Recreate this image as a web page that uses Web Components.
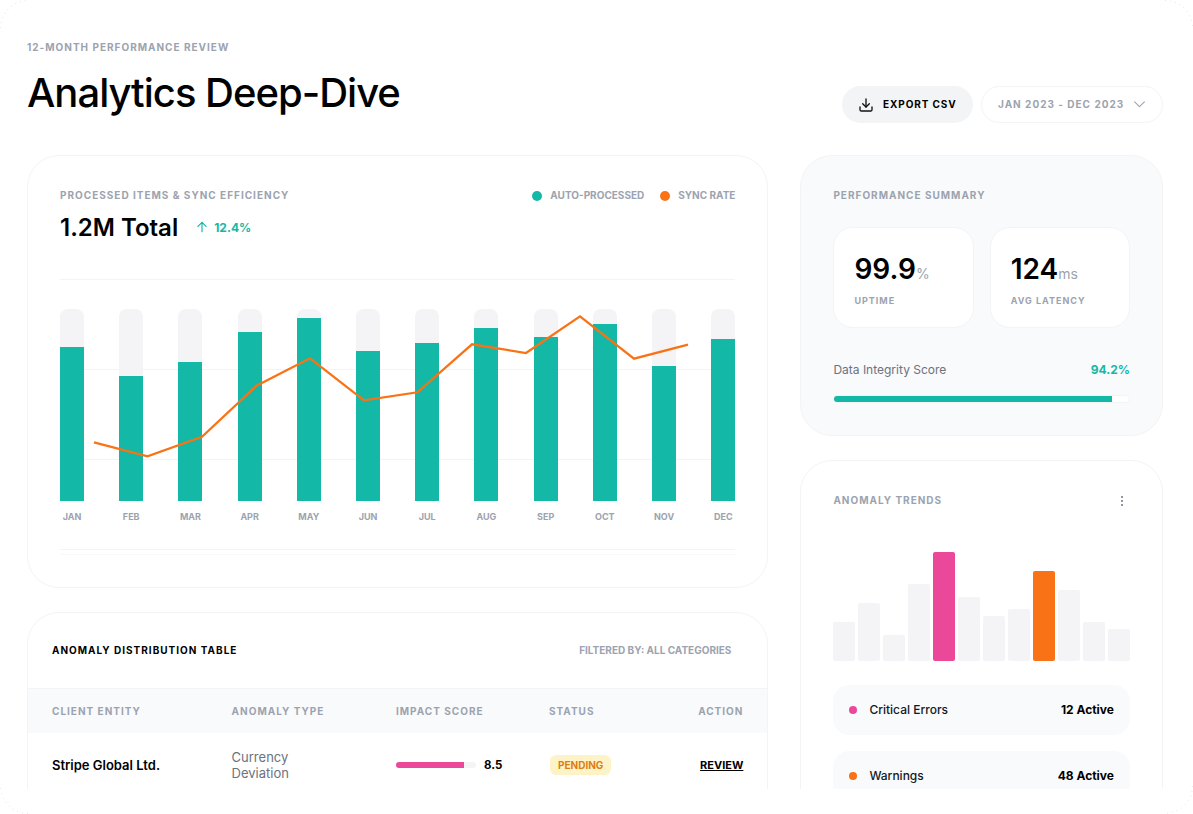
<!DOCTYPE html>
<html lang="en">
<head>
<meta charset="utf-8">
<title>Analytics Deep-Dive</title>
<style>
  html, body { margin: 0; padding: 0; background: #fff; }
  body { font-family: Inter, "Liberation Sans", sans-serif; color: #000; }
</style>
</head>
<body>
<app-frame>
  <page-header></page-header>
  <div slot="left">
    <sync-chart></sync-chart>
    <anomaly-table>
      <anomaly-row client="Stripe Global Ltd." type="Currency Deviation" score="8.5" status="Pending" action="Review"></anomaly-row>
    </anomaly-table>
  </div>
  <div slot="right">
    <summary-card>
      <stat-tile value="99.9" unit="%" label="Uptime"></stat-tile>
      <stat-tile value="124" unit="ms" label="Avg Latency"></stat-tile>
    </summary-card>
    <trends-card>
      <legend-row name="Critical Errors" count="12 Active" color="#ec4899"></legend-row>
      <legend-row name="Warnings" count="48 Active" color="#f97316"></legend-row>
    </trends-card>
  </div>
</app-frame>

<script>
const reset = `*{margin:0;padding:0;box-sizing:border-box;} :host{box-sizing:border-box;}`;

function define(name, html) {
  customElements.define(name, class extends HTMLElement {
    constructor() {
      super();
      const root = this.attachShadow({ mode: 'open' });
      root.innerHTML = typeof html === 'function' ? html(this) : html;
    }
  });
}

define('app-frame', `
<style>
  ${reset}
  :host{display:block;position:relative;width:1193px;height:814px;overflow:hidden;background:#fff;}
  .clip{height:789px;overflow:hidden;padding:40px 30px 0 27px;}
  .cols{display:grid;grid-template-columns:741.4px 1fr;gap:32px;margin-top:32px;}
  ::slotted([slot]){display:flex;flex-direction:column;gap:24px;}
  svg{position:absolute;inset:0;pointer-events:none;}
</style>
<div class="clip">
  <slot></slot>
  <div class="cols">
    <slot name="left"></slot>
    <slot name="right"></slot>
  </div>
</div>
<svg width="1193" height="814" fill="none" stroke="#e0e2e6" stroke-width="1" stroke-dasharray="1 4">
  <path d="M.5 28A27.5 27.5 0 0 1 28 .5"/>
  <path d="M1165 .5A27.5 27.5 0 0 1 1192.5 28"/>
  <path d="M1192.5 786A27.5 27.5 0 0 1 1165 813.5"/>
  <path d="M28 813.5A27.5 27.5 0 0 1 .5 786"/>
</svg>
`);

define('page-header', `
<style>
  ${reset}
  :host{display:flex;justify-content:space-between;align-items:flex-end;}
  .eyebrow{font-size:10px;line-height:15px;font-weight:700;letter-spacing:1px;color:#9ca3af;text-transform:uppercase;margin-bottom:8px;}
  h1{font-size:40px;line-height:60px;font-weight:500;letter-spacing:-1px;color:#000;}
  .actions{display:flex;gap:8px;}
  .btn{display:flex;align-items:center;height:37px;border-radius:19px;font-size:10px;font-weight:700;letter-spacing:1px;text-transform:uppercase;white-space:nowrap;}
  .btn span{margin-bottom:2px;}
  .btn svg{flex-shrink:0;}
  .export{background:#f3f4f6;color:#000;padding:0 16px;gap:9px;width:131px;}
  .export span{letter-spacing:.9px;}
  .range{background:#fff;border:1px solid #f3f4f6;color:#9ca3af;padding:0 16px;gap:9px;width:182px;}
</style>
<div>
  <div class="eyebrow">12-Month Performance Review</div>
  <h1>Analytics Deep-Dive</h1>
</div>
<div class="actions">
  <div class="btn export">
    <svg width="16" height="16" viewBox="0 0 24 24" fill="none" stroke="#111" stroke-width="2" stroke-linecap="round" stroke-linejoin="round"><path d="M21 15v4a2 2 0 0 1-2 2H5a2 2 0 0 1-2-2v-4"/><path d="M7 10l5 5 5-5"/><path d="M12 15V3"/></svg>
    <span>Export CSV</span>
  </div>
  <div class="btn range">
    <span>Jan 2023 - Dec 2023</span>
    <svg width="13" height="13" viewBox="0 0 24 24" fill="none" stroke="#9ca3af" stroke-width="2" stroke-linecap="round" stroke-linejoin="round"><path d="M3 7l9 9 9-9"/></svg>
  </div>
</div>
`);

const months = [
  ['Jan', 154], ['Feb', 125], ['Mar', 139], ['Apr', 169], ['May', 183], ['Jun', 150],
  ['Jul', 158], ['Aug', 173], ['Sep', 164], ['Oct', 177], ['Nov', 135], ['Dec', 162],
];

define('sync-chart', `
<style>
  ${reset}
  :host{display:block;background:#fff;border:1px solid #f3f4f6;border-radius:32px;padding:32px;height:433px;}
  .head{display:flex;justify-content:space-between;align-items:flex-start;}
  .title{font-size:10px;line-height:15px;font-weight:700;letter-spacing:1px;color:#9ca3af;text-transform:uppercase;}
  .total{display:flex;align-items:center;margin-top:8px;height:32px;}
  .total b{font-size:24px;font-weight:600;color:#000;}
  .delta{display:flex;align-items:center;gap:5px;margin-left:17px;font-size:12px;font-weight:700;color:#14b8a6;}
  .legend{display:flex;gap:16px;font-size:10px;line-height:15px;font-weight:700;color:#9ca3af;text-transform:uppercase;}
  .legend span{display:flex;align-items:center;gap:8px;}
  .legend i{width:10px;height:10px;border-radius:50%;}
  .chart{position:relative;height:271px;margin-top:36px;}
  .lines{position:absolute;inset:0;display:flex;flex-direction:column;justify-content:space-between;}
  .lines div{height:1px;background:#f3f4f6;}
  .bars{position:relative;display:flex;justify-content:space-between;padding-top:30px;}
  .col{width:24px;}
  .track{position:relative;height:192px;background:#f4f4f6;border-radius:8px 8px 0 0;overflow:hidden;}
  .fill{position:absolute;left:0;right:0;bottom:0;background:#14b8a6;}
  .month{margin-top:9px;font-size:9px;line-height:13px;font-weight:700;color:#9ca3af;text-align:center;text-transform:uppercase;white-space:nowrap;}
  .line{position:absolute;left:0;top:0;}
  .foot{height:1px;background:#f7f8f9;margin-top:4px;}
</style>
<div class="head">
  <div>
    <div class="title">Processed Items &amp; Sync Efficiency</div>
    <div class="total">
      <b>1.2M Total</b>
      <span class="delta">
        <svg width="14" height="14" viewBox="0 0 24 24" fill="none" stroke="#14b8a6" stroke-width="2" stroke-linecap="round" stroke-linejoin="round"><path d="M12 20V4"/><path d="M5 11l7-7 7 7"/></svg>
        12.4%
      </span>
    </div>
  </div>
  <div class="legend">
    <span><i style="background:#14b8a6"></i>Auto-Processed</span>
    <span><i style="background:#f97316"></i>Sync Rate</span>
  </div>
</div>
<div class="chart">
  <div class="lines"><div></div><div></div><div></div><div></div></div>
  <div class="bars">
    ${months.map(([m, v]) => `<div class="col"><div class="track"><div class="fill" style="height:${v}px"></div></div><div class="month">${m}</div></div>`).join('')}
  </div>
  <svg class="line" width="675" height="271" fill="none" stroke="#f97316" stroke-width="2.25">
    <polyline points="34,163.3 87.5,177.3 142,157.7 196.5,106.7 250,79.3 304,121.3 357.5,113.3 412,65.3 466,74 520,37.3 574,79.7 628,65.7"/>
  </svg>
</div>
<div class="foot"></div>
`);

define('anomaly-table', `
<style>
  ${reset}
  :host{display:block;min-height:260px;background:#fff;border:1px solid #f3f4f6;border-radius:32px;overflow:hidden;}
  .head{display:flex;justify-content:space-between;align-items:center;padding:30px 36px 30px 24px;}
  .head h2{font-size:10px;line-height:15px;font-weight:700;letter-spacing:1px;color:#000;text-transform:uppercase;}
  .head span{font-size:10px;line-height:15px;font-weight:700;color:#9ca3af;text-transform:uppercase;}
  .cols{display:grid;grid-template-columns:179.6px 164.4px 153px 1fr;padding:15px 24px 14px;background:#f9fafb;border-top:1px solid #f3f4f6;font-size:10px;line-height:15px;font-weight:700;letter-spacing:1px;color:#9ca3af;text-transform:uppercase;}
</style>
<div class="head"><h2>Anomaly Distribution Table</h2><span>Filtered by: All Categories</span></div>
<div class="cols"><div>Client Entity</div><div>Anomaly Type</div><div>Impact Score</div><div style="display:flex;justify-content:space-between"><span>Status</span><span>Action</span></div></div>
<slot></slot>
`);

define('anomaly-row', el => `
<style>
  ${reset}
  :host{display:grid;grid-template-columns:179.6px 164.4px 153px 1fr;align-items:center;padding:16px 24px;}
  .client{font-size:13px;font-weight:600;color:#000;}
  .type{font-size:13px;line-height:16px;color:#6b7280;width:80px;}
  .impact{display:flex;align-items:center;gap:8px;font-size:11.5px;font-weight:700;color:#000;}
  .bar{width:80px;height:6px;border-radius:3px;background:#f4f4f6;overflow:hidden;}
  .bar i{display:block;height:100%;background:#ec4899;}
  .last{display:flex;justify-content:space-between;align-items:center;}
  .badge{display:block;height:20px;line-height:20px;padding:0 8px;margin-left:1px;border-radius:6px;background:#fef3c7;color:#dd7d12;font-size:10px;font-weight:700;text-transform:uppercase;}
  a{font-size:11px;font-weight:700;color:#000;text-decoration:underline;text-transform:uppercase;}
</style>
<div class="client">${el.getAttribute('client')}</div>
<div class="type">${el.getAttribute('type')}</div>
<div class="impact"><div class="bar"><i style="width:${parseFloat(el.getAttribute('score')) * 10}%"></i></div>${el.getAttribute('score')}</div>
<div class="last"><span class="badge">${el.getAttribute('status')}</span><a>${el.getAttribute('action')}</a></div>
`);

define('summary-card', `
<style>
  ${reset}
  :host{display:block;background:#f9fafb;border:1px solid #f3f4f6;border-radius:32px;padding:32px;height:281px;}
  .title{font-size:10px;line-height:15px;font-weight:700;letter-spacing:1px;color:#9ca3af;text-transform:uppercase;}
  .tiles{display:grid;grid-template-columns:1fr 1fr;gap:16px;margin-top:24px;}
  .score{display:flex;justify-content:space-between;align-items:center;margin-top:32px;font-size:12px;line-height:20px;color:#6b7280;}
  .score b{font-weight:700;color:#14b8a6;}
  .track{margin-top:15px;height:8px;background:#fff;border:1px solid #f3f4f6;border-radius:4px;overflow:hidden;}
  .track i{display:block;height:100%;width:94.2%;background:#14b8a6;}
</style>
<div class="title">Performance Summary</div>
<div class="tiles"><slot></slot></div>
<div class="score"><span>Data Integrity Score</span><b>94.2%</b></div>
<div class="track"><i></i></div>
`);

define('stat-tile', el => `
<style>
  ${reset}
  :host{display:block;background:#fff;border:1px solid #f3f4f6;border-radius:20px;padding:20px;}
  .value{font-size:28px;line-height:42px;font-weight:600;color:#000;}
  .value span{font-size:14px;line-height:1;font-weight:400;color:#9ca3af;}
  .label{margin-top:4px;font-size:9px;line-height:13px;font-weight:700;letter-spacing:1px;color:#9ca3af;text-transform:uppercase;}
</style>
<div class="value">${el.getAttribute('value')}<span>${el.getAttribute('unit')}</span></div>
<div class="label">${el.getAttribute('label')}</div>
`);

const trendBars = [[39], [58], [26], [77], [109, '#ec4899'], [64], [45], [52], [90, '#f97316'], [71], [39], [32]];

define('trends-card', `
<style>
  ${reset}
  :host{display:block;background:#fff;border:1px solid #f3f4f6;border-radius:32px;padding:32px;}
  .head{display:flex;justify-content:space-between;align-items:center;}
  .title{font-size:10px;line-height:15px;font-weight:700;letter-spacing:1px;color:#9ca3af;text-transform:uppercase;}
  .bars{display:flex;justify-content:space-between;align-items:flex-end;height:128px;margin:25px 0 24px;}
  .bars i{display:block;width:22px;border-radius:2px;background:#f4f4f6;}
  .rows{display:flex;flex-direction:column;gap:16px;}
  svg{margin-right:1px;}
</style>
<div class="head">
  <div class="title">Anomaly Trends</div>
  <svg width="14" height="14" viewBox="0 0 14 14" fill="#6b7280"><circle cx="7" cy="3" r="1"/><circle cx="7" cy="7" r="1"/><circle cx="7" cy="11" r="1"/></svg>
</div>
<div class="bars">${trendBars.map(([h, c]) => `<i style="height:${h}px${c ? ';background:' + c : ''}"></i>`).join('')}</div>
<div class="rows"><slot></slot></div>
`);

define('legend-row', el => `
<style>
  ${reset}
  :host{display:flex;align-items:center;height:50px;padding:0 16px;background:#f9fafb;border-radius:16px;}
  i{width:8px;height:8px;border-radius:50%;margin-right:12px;}
  span{margin-bottom:2px;font-size:12px;}
  .name{flex:1;font-weight:500;color:#111827;}
  .count{font-weight:700;color:#000;}
</style>
<i style="background:${el.getAttribute('color')}"></i>
<span class="name">${el.getAttribute('name')}</span>
<span class="count">${el.getAttribute('count')}</span>
`);
</script>
</body>
</html>
